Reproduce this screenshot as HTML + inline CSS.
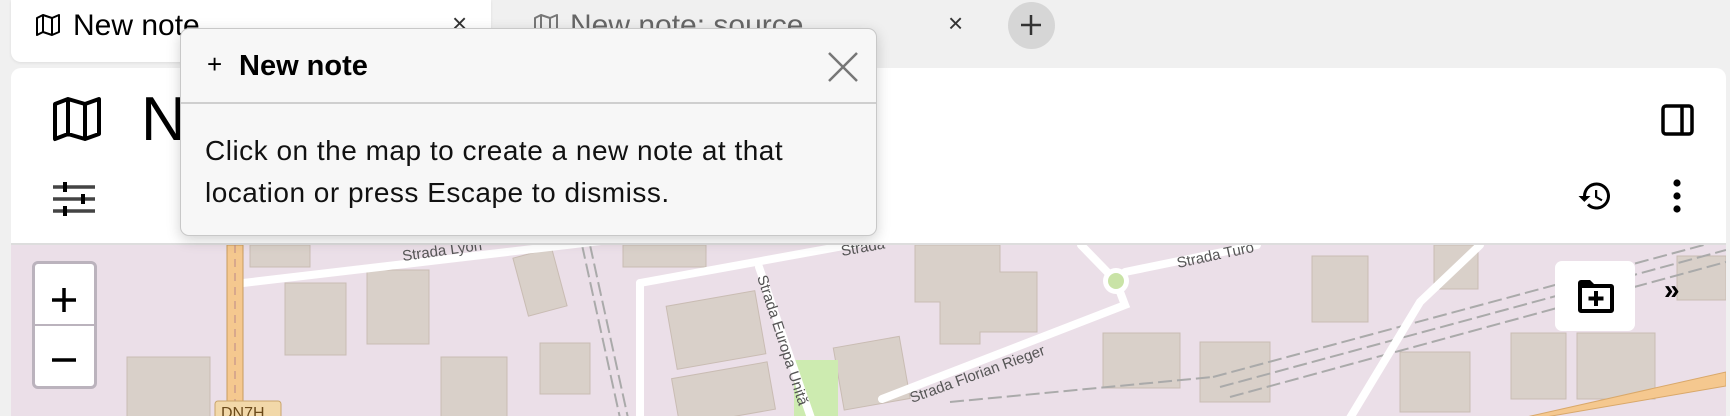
<!DOCTYPE html>
<html><head><meta charset="utf-8"><style>
*{margin:0;padding:0;box-sizing:border-box}
body{width:1730px;height:416px;overflow:hidden;background:#f0f0f0;font-family:"Liberation Sans",sans-serif;position:relative;color:#000}
.abs{position:absolute}
.tab{left:11px;top:0;width:480px;height:62px;background:#fff;border-radius:0 0 10px 10px;box-shadow:0 1px 3px rgba(0,0,0,.08)}
.t1{left:73px;top:9px;font-size:30px}
.t2{left:570px;top:9px;font-size:30px;color:#666}
.panel{left:11px;top:68px;width:1715px;height:348px;background:#fff;border-radius:10px 10px 0 0;overflow:hidden}
.map{left:11px;top:243px;width:1715px;height:173px;background:#ebdfe8;border-top:2px solid #ddd;overflow:hidden}
.pop{left:180px;top:28px;width:697px;height:208px;background:#f7f7f7;border:1px solid #c8c8c8;border-radius:9px;box-shadow:0 4px 14px rgba(0,0,0,.18)}
.pophead{height:75px;border-bottom:2px solid #cfcfcf;position:relative}
.popbody{padding:26px 0 0 24px;font-size:28px;letter-spacing:0.5px;line-height:42px;color:#111}
</style></head><body>
<div class="abs tab"></div>
<svg class="abs" style="left:35px;top:14px" width="26" height="22" viewBox="0 0 26 22" fill="none" stroke="#000" stroke-width="2" stroke-linejoin="round"><path d="M2 4 L8 1 L17 4 L24 1 V18 L17 21 L8 18 L2 21 Z M8 1 V18 M17 4 V21"/></svg>
<div class="abs t1">New note</div>
<div class="abs" style="left:452px;top:8px;font-size:26px;color:#333">×</div>
<svg class="abs" style="left:533px;top:14px" width="26" height="22" viewBox="0 0 26 22" fill="none" stroke="#777" stroke-width="2" stroke-linejoin="round"><path d="M2 4 L8 1 L17 4 L24 1 V18 L17 21 L8 18 L2 21 Z M8 1 V18 M17 4 V21"/></svg>
<div class="abs t2">New note: source</div>
<div class="abs" style="left:948px;top:8px;font-size:26px;color:#333">×</div>
<div class="abs" style="left:1008px;top:2px;width:47px;height:47px;border-radius:50%;background:#d6d6d6"></div>
<svg class="abs" style="left:1019px;top:13px" width="24" height="24"><path d="M12 2V22M2 12H22" stroke="#333" stroke-width="2.5"/></svg>

<div class="abs panel"></div>
<svg class="abs" style="left:52px;top:96px" width="50" height="46" viewBox="0 0 50 46" fill="none" stroke="#000" stroke-width="4" stroke-linejoin="round"><path d="M3 8 L16 3 L33 8 L47 3 V38 L33 43 L16 38 L3 43 Z M16 3 V38 M33 8 V43"/></svg>
<div class="abs" style="left:141px;top:84px;font-size:62px">N</div>
<svg class="abs" style="left:1661px;top:104px" width="33" height="32"><rect x="2" y="2" width="29" height="28" rx="3" fill="none" stroke="#000" stroke-width="3.5"/><path d="M21 2V30" stroke="#000" stroke-width="3.5"/></svg>
<svg class="abs" style="left:53px;top:182px" width="42" height="34"><path d="M0 5H42M0 17H42M0 29H42" stroke="#444" stroke-width="3.5"/><path d="M12 0V10M30 12V22M12 24V34" stroke="#000" stroke-width="4"/></svg>
<div class="abs" style="left:172px;top:182px;font-size:28px;font-weight:bold">⋮</div>
<svg class="abs" style="left:1576px;top:178px" width="38" height="36" viewBox="0 0 24 24"><path d="M13 3a9 9 0 0 0-9 9H1l3.9 3.9L9 12H6a7 7 0 1 1 2.05 4.95l-1.42 1.42A9 9 0 1 0 13 3zm-1 5v5l4.28 2.540.72-1.21-3.5-2.08V8H12z" fill="#000"/></svg>
<svg class="abs" style="left:1670px;top:178px" width="14" height="36"><circle cx="7" cy="5" r="3.6"/><circle cx="7" cy="18" r="3.6"/><circle cx="7" cy="31" r="3.6"/></svg>

<div class="abs map">
<svg width="1715" height="173" viewBox="11 243 1715 173" style="display:block">
<g fill="#d9d0c9" stroke="#c9bcb3" stroke-width="1">
<rect x="285" y="281" width="61" height="72"/><rect x="367" y="268" width="62" height="74"/>
<rect x="127" y="355" width="83" height="61"/><rect x="441" y="355" width="66" height="61"/>
<rect x="540" y="341" width="50" height="51"/><rect x="671" y="296" width="90" height="64" transform="rotate(-10 716 328)"/>
<rect x="675" y="368" width="97" height="48" transform="rotate(-10 723 392)"/><rect x="838" y="340" width="67" height="63" transform="rotate(-10 870 370)"/>
<path d="M915 243H1000V270H1037V330H980V342H940V300H915Z"/><rect x="1103" y="331" width="77" height="55"/>
<rect x="1511" y="331" width="55" height="66"/><rect x="1577" y="331" width="78" height="66"/>
<rect x="1677" y="254" width="49" height="44"/><rect x="623" y="243" width="83" height="22"/>
<rect x="1434" y="243" width="44" height="44"/><rect x="1312" y="254" width="56" height="66"/>
<rect x="250" y="243" width="60" height="22"/><rect x="520" y="250" width="40" height="60" transform="rotate(-15 540 280)"/>
<rect x="1200" y="340" width="70" height="60"/><rect x="1400" y="350" width="70" height="60"/>
</g>
<path d="M794 358h44v58h-44z" fill="#cdebb0"/>
<g stroke="#aaa" stroke-width="2" stroke-dasharray="14 5" fill="none">
<path d="M1213 375L1726 237M1220 385L1726 248M1230 395L1726 260"/><path d="M582 243L620 416M590 243L628 416"/>
<path d="M950 400L1213 375"/>
</g>
<g stroke="#fff" stroke-width="8" fill="none" stroke-linecap="round">
<path d="M243 281L618 237"/><path d="M640 281L882 237"/><path d="M640 281V416"/>
<path d="M759 265L811 416"/><path d="M882 397L1125 303Q1120 290 1116 279"/><path d="M1116 279L1081 243"/>
<path d="M1125 270L1257 243"/><path d="M1350 416L1420 300L1480 243"/>
</g>
<circle cx="1116" cy="279" r="13" fill="#fff"/><circle cx="1116" cy="279" r="8" fill="#c9e3a6"/>
<path d="M1522 416L1726 370V384L1540 416Z" fill="#f5c88f" stroke="#d9a86a"/>
<rect x="227" y="243" width="16" height="173" fill="#f5c88f" stroke="#c79b5f"/>
<path d="M235 243V416" stroke="#b88" stroke-dasharray="8 6"/>
<rect x="215" y="399" width="66" height="20" rx="3" fill="#f2d8a9" stroke="#c9a56b"/>
<text x="221" y="416" font-size="16" fill="#6b4a1a">DN7H</text>
<g font-size="15" fill="#555" font-family="Liberation Sans,sans-serif">
<text transform="translate(403 259) rotate(-8)">Strada Lyon</text>
<text transform="translate(842 254) rotate(-10)">Strada</text>
<text transform="translate(1178 266) rotate(-12)">Strada Turo</text>
<text transform="translate(912 401) rotate(-20)">Strada Florian Rieger</text>
<text transform="translate(757 275) rotate(72)">Strada Europa Unită</text>
</g>
</svg>
</div>
<div class="abs" style="left:32px;top:261px;width:65px;height:128px;background:#fff;border:3px solid #bbb3bd;border-radius:6px"></div>
<div class="abs" style="left:35px;top:324px;width:59px;height:2px;background:#bbb3bd"></div>
<svg class="abs" style="left:50px;top:286px" width="28" height="28"><path d="M14 2V26M2 14H26" stroke="#000" stroke-width="3.5"/></svg>
<svg class="abs" style="left:50px;top:346px" width="28" height="28"><path d="M2 14H26" stroke="#000" stroke-width="3.5"/></svg>
<div class="abs" style="left:1555px;top:261px;width:80px;height:70px;background:#fff;border-radius:7px"></div>
<svg class="abs" style="left:1576px;top:277px" width="40" height="38" viewBox="0 0 40 38"><path d="M2 6a3 3 0 0 1 3-3h9l4 4h17a3 3 0 0 1 3 3v23a3 3 0 0 1-3 3H5a3 3 0 0 1-3-3z" fill="#000"/><rect x="6" y="11" width="28" height="21" fill="#fff"/><path d="M20 14V29M12.5 21.5H27.5" stroke="#000" stroke-width="4"/></svg>
<div class="abs" style="left:1664px;top:274px;font-size:28px;font-weight:bold">»</div>

<div class="abs pop">
<div class="pophead">
<div class="abs" style="left:26px;top:20px;font-size:26px">+</div>
<div class="abs" style="left:58px;top:21px;font-size:29px;font-weight:bold">New note</div>
<svg class="abs" style="left:646px;top:22px" width="32" height="32"><path d="M2 2L30 30M30 2L2 30" stroke="#777" stroke-width="2.5"/></svg>
</div>
<div class="popbody">Click on the map to create a new note at that<br>location or press Escape to dismiss.</div>
</div>
</body></html>
